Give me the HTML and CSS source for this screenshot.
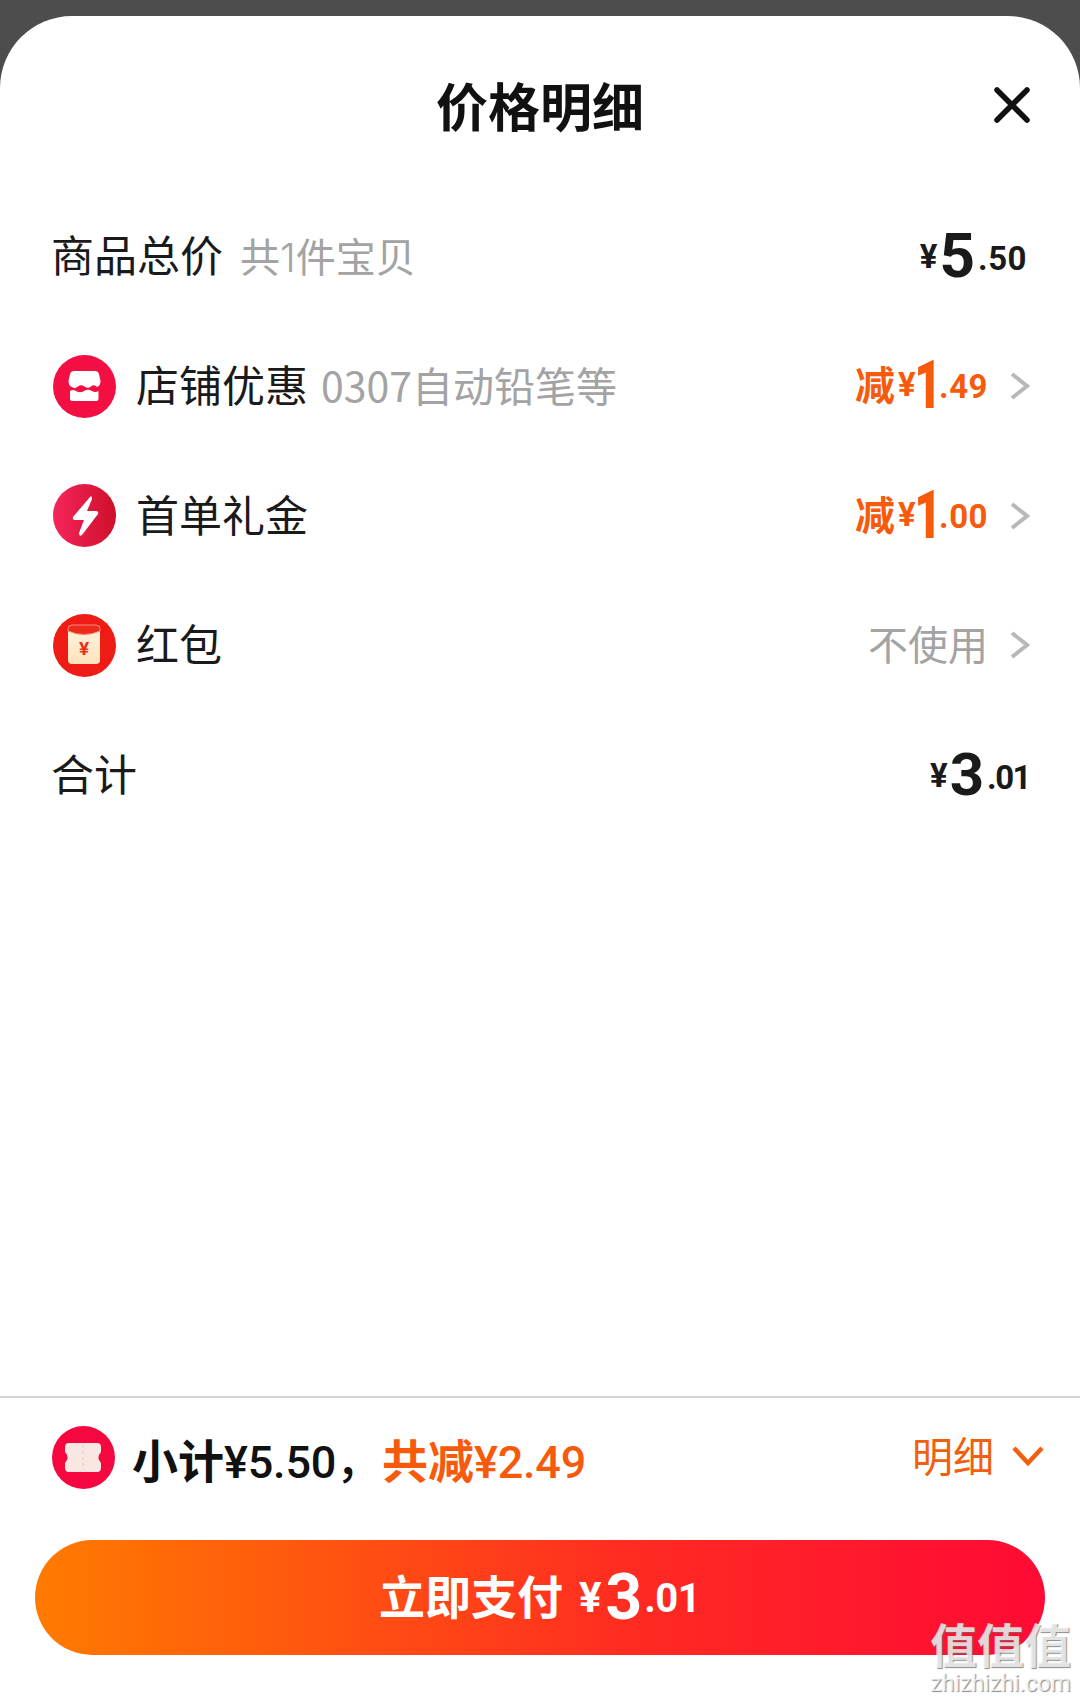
FILE: index.html
```html
<!DOCTYPE html>
<html lang="zh-CN">
<head>
<meta charset="utf-8">
<title>价格明细</title>
<link rel="stylesheet" href="styles.css">
</head>
<body>
<main class="sheet">
  <header class="header">
    <h1 class="title">价格明细</h1>
    <svg class="close" viewBox="0 0 36 36"><path d="M3 3L33 33M33 3L3 33"/></svg>
  </header>
  <section class="rows">
    <div class="row">
      <div class="label flush first">商品总价<span class="note short">共<span class="one">1</span>件宝贝</span></div>
      <div class="price dark"><span class="yen">¥</span><span class="big">5</span><span class="dec">.50</span></div>
    </div>
    <div class="row">
      <svg class="icon" viewBox="0 0 63 63">
        <circle cx="31.5" cy="31.5" r="31.5" fill="#f40f42"/>
        <path d="M21 16H42Q45 16 46 19L47.500 26Q47.500 31 44 32Q41 29 38 31.500Q35 34 31.500 31.500Q28 29 25 31.500Q22 34 19 32Q15.500 31 15.500 26L17 19Q18 16 21 16Z" fill="#fff"/>
        <path d="M17 36Q20 34 23 36Q27 38.500 31 36Q35 33.500 39 36Q42 38 45.500 36V43.500Q45.500 46 43 46H19.500Q17 46 17 43.500Z" fill="#fff"/>
      </svg>
      <div class="label">店铺优惠<span class="note">0307自动铅笔等</span></div>
      <div class="price orange"><span class="cut">减</span><span class="yen">¥</span><span class="big">1</span><span class="dec">.49</span></div>
      <svg class="chev" viewBox="0 0 20 28"><path d="M2 2L17 14L2 26"/></svg>
    </div>
    <div class="row">
      <svg class="icon" viewBox="0 0 63 63">
        <defs><linearGradient id="boltbg" x1="0" y1="0" x2="1" y2="0"><stop offset="0" stop-color="#f4265c"/><stop offset="1" stop-color="#cf0f2b"/></linearGradient></defs>
        <circle cx="31.5" cy="31.5" r="31.5" fill="url(#boltbg)"/>
        <path d="M37 13L20 33Q19 36 22 36L31 36L26 49Q26 53 29 51L45 30Q46 27 43 27L34 27L39 15Q39 11 37 13Z" fill="#fff"/>
      </svg>
      <div class="label">首单礼金</div>
      <div class="price orange"><span class="cut">减</span><span class="yen">¥</span><span class="big">1</span><span class="dec">.00</span></div>
      <svg class="chev" viewBox="0 0 20 28"><path d="M2 2L17 14L2 26"/></svg>
    </div>
    <div class="row">
      <svg class="icon" viewBox="0 0 63 63">
        <defs><linearGradient id="packet" x1="0" y1="0" x2="0" y2="1"><stop offset="0" stop-color="#fff4dc"/><stop offset="1" stop-color="#fde3bd"/></linearGradient></defs>
        <circle cx="31.5" cy="31.5" r="31.5" fill="#ee1c14"/>
        <rect x="15" y="11" width="32" height="39" rx="4" fill="url(#packet)"/>
        <path d="M15 15Q15 11 19 11H43Q47 11 47 15V17Q31 24 15 17Z" fill="#ee2a1c" stroke="#f78a78" stroke-width="1"/>
        <text class="packet-yen" x="31" y="41" text-anchor="middle">¥</text>
      </svg>
      <div class="label">红包</div>
      <div class="unused">不使用</div>
      <svg class="chev" viewBox="0 0 20 28"><path d="M2 2L17 14L2 26"/></svg>
    </div>
    <div class="row">
      <div class="label flush">合计</div>
      <div class="price dark total"><span class="yen">¥</span><span class="big">3</span><span class="dec">.01</span></div>
    </div>
  </section>
  <footer class="footer">
    <div class="summary">
      <svg class="icon" viewBox="0 0 63 63">
        <circle cx="31.5" cy="31.5" r="31.5" fill="#f5083f"/>
        <path d="M17 17H45Q49 17 49 21V26Q44 31.500 49 37V42Q49 46 45 46H17Q13 46 13 42V37Q18 31.500 13 26V21Q13 17 17 17Z" fill="#f9e8e2"/>
        <path d="M31 19V44" stroke="#f3cfc8" stroke-width="1.500" stroke-dasharray="3 3"/>
      </svg>
      <div class="sum-text"><span class="cjk">小计</span>¥5.50，<span class="sum-cut"><span class="cjk">共减</span>¥2.49</span></div>
      <div class="detail">明细</div>
      <svg class="down" viewBox="0 0 32 20"><path d="M2 2L16 17L30 2"/></svg>
    </div>
    <button class="pay" type="button"><span class="pay-label">立即支付</span><span class="pay-price"><span class="pay-yen">¥</span><span class="pay-big">3</span><span class="pay-dec">.01</span></span></button>
  </footer>
  <div class="mark"><div class="mark-cn">值值值</div><div class="mark-en">zhizhizhi.com</div></div>
</main>
</body>
</html>
```
FILE: styles.css
```css
* { box-sizing: border-box; }
html, body { margin: 0; padding: 0; }
body {
  width: 1080px;
  height: 1700px;
  overflow: hidden;
  background: #4d4d4d;
  font-family: "Noto Sans CJK SC", "Noto Sans", sans-serif;
  color: #111;
  padding-top: 16px;
}
.sheet {
  position: relative;
  height: 1684px;
  background: #fff;
  border-radius: 72px 72px 0 0;
  display: flex;
  flex-direction: column;
}
.header {
  height: 176px;
  padding: 51px 50px 0;
  display: grid;
  grid-template-columns: 1fr auto 1fr;
  align-items: start;
}
.title {
  grid-column: 2;
  margin: 0;
  font-size: 52px;
  line-height: 76px;
  font-weight: 700;
  color: #111;
}
.close {
  grid-column: 3;
  justify-self: end;
  width: 36px;
  height: 36px;
  margin-top: 20px;
  fill: none;
  stroke: #111;
  stroke-width: 5.5;
  stroke-linecap: round;
}
.rows { display: flex; flex-direction: column; }
.row {
  height: 129.5px;
  padding: 0 50px 0 53px;
  display: flex;
  align-items: center;
}
.icon { width: 63px; height: 63px; flex: none; margin-right: 20px; }
.label {
  flex: 1;
  margin-top: -6px;
  font-size: 43px;
  line-height: 60px;
  color: #1a1a1a;
  white-space: nowrap;
}
.flush { margin-left: -2px; }
.first { margin-top: -2px; }
.note { margin-left: 13px; font-size: 41px; color: #a3a3a3; }
.short { margin-left: 17px; font-size: 40px; }
.one { font-family: "Inter", sans-serif; font-weight: 300; }
.price {
  display: flex;
  align-items: center;
  font-family: "Roboto", "Noto Sans CJK SC", sans-serif;
  font-weight: 700;
  line-height: 60px;
}
.dark { color: #1a1a1a; margin-right: 3px; }
.orange { color: #f85a0c; }
.yen { font-size: 33px; margin-right: 2px; }
.big { font-size: 62px; }
.dark .big { margin-top: -2px; }
.dec { font-size: 33px; margin-left: 3px; letter-spacing: 0.5px; }
.dark .dec { margin-top: 4px; }
.total { margin-right: 0; }
.total .big { font-size: 60px; margin-top: 0; }
.total .yen { margin-right: 2px; margin-top: 2px; }
.total .dec { margin-left: 3px; letter-spacing: -1.5px; margin-top: 6px; }
.orange { margin-top: -2px; }
.orange .big {
  display: inline-block;
  margin: 2px -10px 0 -9px;
  font-size: 66px;
  font-weight: 900;
  transform: scaleX(0.72);
}
.orange .dec { margin-left: 2px; margin-top: 4px; }
.cut {
  margin-right: 3px;
  margin-top: -4px;
  font-family: "Noto Sans CJK SC", sans-serif;
  font-size: 40px;
}
.unused { font-size: 40px; line-height: 60px; color: #a3a3a3; margin-top: -4px; }
.chev {
  width: 20px;
  height: 28px;
  margin-left: 22px;
  flex: none;
  fill: none;
  stroke: #b8b8b8;
  stroke-width: 4;
}
.packet-yen { font-family: "Roboto", sans-serif; font-size: 19px; font-weight: 700; fill: #e8301f; }
.footer { margin-top: auto; }
.summary {
  border-top: 2px solid #d4d4d4;
  height: 144px;
  padding: 28px 36px 0 52px;
  display: flex;
  align-items: flex-start;
}
.summary .icon { margin-right: 17px; }
.sum-text {
  flex: 1;
  margin-top: -1px;
  font-family: "Roboto", "Noto Sans CJK SC", sans-serif;
  font-size: 45px;
  line-height: 66px;
  font-weight: 500;
  letter-spacing: -0.2px;
  color: #111;
  white-space: nowrap;
}
.cjk { font-family: "Noto Sans CJK SC", sans-serif; font-size: 46px; font-weight: 700; letter-spacing: 0; }
.sum-cut { margin-left: 1px; color: #f85a0c; }
.detail {
  margin-top: -1px;
  margin-right: 18px;
  font-size: 41px;
  line-height: 58px;
  color: #f0600f;
}
.down {
  width: 32px;
  height: 20px;
  margin-top: 20px;
  fill: none;
  stroke: #f0600f;
  stroke-width: 4.5;
}
.pay {
  display: flex;
  align-items: center;
  justify-content: center;
  width: 1010px;
  height: 115px;
  margin: 0 35px 45px;
  border: 0;
  border-radius: 58px;
  padding: 0 1px 0 0;
  background: linear-gradient(90deg, #ff7b00 0%, #ff2a22 60%, #ff0a35 100%);
  color: #fff;
  font-family: "Noto Sans CJK SC", sans-serif;
  font-size: 46px;
  font-weight: 700;
}
.pay-label { margin-bottom: 8px; }
.pay-price {
  display: flex;
  align-items: center;
  margin-left: 16px;
  font-family: "Roboto", sans-serif;
  line-height: 60px;
}
.pay-yen { font-size: 42px; margin-right: 4px; }
.pay-big { font-size: 64px; }
.pay-dec { font-size: 40px; margin-left: 2px; margin-top: 3px; letter-spacing: -0.5px; }
.mark {
  position: absolute;
  left: 929px;
  top: 1602px;
  width: 143px;
  color: rgba(255, 255, 255, 0.75);
  text-shadow: 1px 1px 1px rgba(110, 110, 110, 0.8);
  text-align: center;
  pointer-events: none;
}
.mark-cn { font-size: 47px; line-height: 50px; font-weight: 700; white-space: nowrap; }
.mark-en { margin-top: 5px; font-family: "Roboto", sans-serif; font-size: 23px; line-height: 22px; white-space: nowrap; }
```
